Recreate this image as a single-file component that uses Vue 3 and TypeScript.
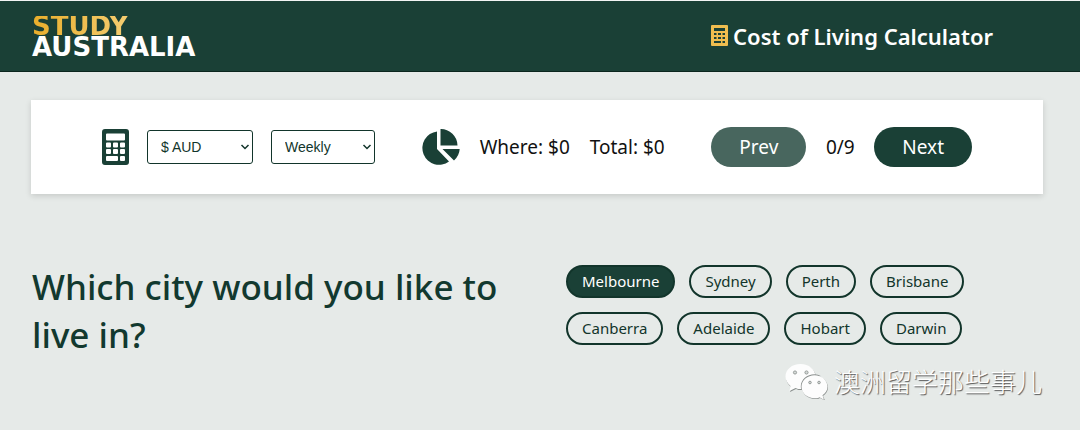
<script setup lang="ts">
import { ref } from 'vue'

const currency = ref<string>('AUD')
const period = ref<string>('Weekly')
const cities: string[] = ['Melbourne', 'Sydney', 'Perth', 'Brisbane', 'Canberra', 'Adelaide', 'Hobart', 'Darwin']
const selected = ref<string>('Melbourne')
</script>

<template>
  <div class="page">
    <header class="bar">
      <a class="logo" href="#"><span class="gold">STUDY</span><span>AUSTRALIA</span></a>
      <h1 class="title">
        <svg class="title-icon" viewBox="0 0 17 21" aria-hidden="true">
          <path
            fill="#efbd4f"
            fill-rule="evenodd"
            d="M1 0h15q1 0 1 1v19q0 1-1 1H1q-1 0-1-1V1q0-1 1-1z
               M3 3v3h11V3z M3 8v2h2.500V8z M7 8v2h3V8z M11.500 8v2H14V8z
               M3 12v2h2.500v-2z M7 12v2h3v-2z M11.500 12v2H14v-2z
               M3 16v2h7v-2z M11.500 16v2H14v-2z"
          />
        </svg>
        <span>Cost of Living Calculator</span>
      </h1>
    </header>

    <section class="card">
      <div class="options">
        <svg class="calc" viewBox="0 0 27 36" aria-hidden="true">
          <path
            fill="#1a4036"
            fill-rule="evenodd"
            d="M3 0h21a3 3 0 0 1 3 3v30a3 3 0 0 1-3 3H3a3 3 0 0 1-3-3V3a3 3 0 0 1 3-3z
               M5 4.500h17q1 0 1 1v5q0 1-1 1H5q-1 0-1-1v-5q0-1 1-1z
               M5 13.500h3q1 0 1 1v3q0 1-1 1H5q-1 0-1-1v-3q0-1 1-1z
               M12 13.500h3q1 0 1 1v3q0 1-1 1h-3q-1 0-1-1v-3q0-1 1-1z
               M19 13.500h3q1 0 1 1v3q0 1-1 1h-3q-1 0-1-1v-3q0-1 1-1z
               M5 20h3q1 0 1 1v3q0 1-1 1H5q-1 0-1-1v-3q0-1 1-1z
               M12 20h3q1 0 1 1v3q0 1-1 1h-3q-1 0-1-1v-3q0-1 1-1z
               M19 20h3q1 0 1 1v3q0 1-1 1h-3q-1 0-1-1v-3q0-1 1-1z
               M5 27h10q1 0 1 1v3q0 1-1 1H5q-1 0-1-1v-3q0-1 1-1z
               M19 27h3q1 0 1 1v3q0 1-1 1h-3q-1 0-1-1v-3q0-1 1-1z"
          />
        </svg>
        <select v-model="currency" class="select" aria-label="Currency">
          <option value="AUD">$ AUD</option>
        </select>
        <select v-model="period" class="select narrow" aria-label="Period">
          <option>Weekly</option>
        </select>
      </div>

      <div class="totals">
        <svg class="pie" viewBox="0 0 38 36" aria-hidden="true">
          <path
            fill="#1a4036"
            d="M15 2.500V20l12 12.500A16.700 16.700 0 1 1 15 2.500zM18.500 0a16.700 16.700 0 0 1 17 16.500h-17zM20.500 20h17.200a17 17 0 0 1-5.700 11.500z"
          />
        </svg>
        <span>Where: $0</span>
        <span>Total: $0</span>
      </div>

      <nav class="steps" aria-label="Steps">
        <button class="step prev" type="button">Prev</button>
        <span class="count">0/9</span>
        <button class="step" type="button">Next</button>
      </nav>
    </section>

    <main class="question">
      <h2>Which city would you like to live in?</h2>
      <div class="cities">
        <button
          v-for="city in cities"
          :key="city"
          type="button"
          class="chip"
          :class="{ active: city === selected }"
          :aria-pressed="city === selected"
          @click="selected = city"
        >{{ city }}</button>
      </div>
    </main>

    <div class="watermark">
      <svg viewBox="0 0 43 37" aria-hidden="true">
        <g fill="#8b908e">
          <path d="M16 2C7.500 2 1 7.500 1 14.500c0 4 2 7 5 9.500l-1 5 6-3c2 1 3 1 5 1 8 0 15-5.500 15-12.500S24.500 2 16 2z" />
          <path d="M30 13c-7 0-13 5-13 11.500S23 36 30 36c2 0 4 0 5-1l5 2.500-2-4.500c3-2 5-5 5-8.500C43 18 37 13 30 13z" />
        </g>
        <path fill="#fdfdfd" d="M15.500 1C7 1 .5 6.500.5 13.500c0 4 2 7 5 9.500l-1 5 6-3c2 1 3 1 5 1 8 0 15-5.500 15-12.500S24 1 15.500 1z" />
        <path fill="#8b908e" d="M29.500 11.300c-7.500 0-13.700 5.500-13.700 12 0 1 0 2 .4 3h2l11-13h7c-2-1.300-4.500-2-6.700-2z" />
        <path fill="#fdfdfd" d="M29.500 12.300c-7 0-13 5-13 11.500s6 11.500 13 11.500c2 0 4 0 5-1l4.500 2.500-1.500-4.500c3-2 5-5 5-8.500 0-6.500-6-11.500-13-11.500z" />
        <g fill="#d5dad8" stroke="#858b89" stroke-width=".8">
          <circle cx="10" cy="9.500" r="1.600" /><circle cx="21.500" cy="9.500" r="1.600" />
          <circle cx="25" cy="19.500" r="1.300" /><circle cx="34" cy="19.500" r="1.300" />
        </g>
      </svg>
      <span lang="zh-CN">澳洲留学那些事儿</span>
    </div>
  </div>
</template>

<style>
body {
  margin: 0;
  background: #e6eae8;
}
</style>

<style scoped>
.page {
  position: relative;
  box-sizing: border-box;
  min-height: 100vh;
  background: #e6eae8;
  color: #111;
  font-family: "Noto Sans", sans-serif;
  font-size: 19px;
}
.bar {
  display: flex;
  align-items: center;
  justify-content: space-between;
  padding: 15px 87px 13px 32px;
  border-top: 1px solid #f3f5f4;
  border-bottom: 1px solid #0b261e;
  background: #1a4036;
  color: #fff;
}
.logo {
  display: flex;
  flex-direction: column;
  color: #fff;
  font: bold 26px/21px "DejaVu Sans", sans-serif;
  text-decoration: none;
}
.gold {
  background: linear-gradient(90deg, #e9ae2b, #f5cd72 60%);
  background-clip: text;
  color: transparent;
}
.title {
  display: flex;
  align-items: center;
  gap: 5px;
  margin: 0;
  padding-bottom: 3px;
  font-size: 22px;
  font-weight: 600;
  line-height: 28px;
}
.title-icon {
  width: 17px;
  height: 21px;
}
.card {
  display: flex;
  align-items: center;
  justify-content: space-between;
  margin: 28px 37px 0 31px;
  padding: 27px 71px;
  background: #fff;
  box-shadow: 0 2px 6px rgba(0, 0, 0, 0.14);
}
.options,
.totals,
.steps {
  display: flex;
  align-items: center;
  gap: 18px;
  white-space: nowrap;
}
.totals {
  gap: 20px;
}
.calc {
  width: 27px;
  height: 36px;
}
.select {
  appearance: none;
  box-sizing: border-box;
  width: 106px;
  height: 34px;
  padding: 0 16px 0 13px;
  border: 1px solid #12352b;
  border-radius: 3px;
  background: #fff url("data:image/svg+xml,%3Csvg xmlns='http://www.w3.org/2000/svg' width='10' height='6'%3E%3Cpath d='M1.500 1L5 4.500 8.500 1' fill='none' stroke='%2312352b' stroke-width='1.500'/%3E%3C/svg%3E") no-repeat right 2px center;
  color: #12352b;
  font: 14px "Liberation Sans", sans-serif;
}
.narrow {
  width: 104px;
}
.pie {
  width: 38px;
  height: 36px;
}
.count {
  min-width: 32px;
  text-align: center;
}
.step {
  padding: 6px 28px;
  border: 0;
  border-radius: 20px;
  background: #1a4036;
  color: #fff;
  font: inherit;
  line-height: 28px;
}
.prev {
  background: #48665e;
}
.question {
  display: grid;
  grid-template-columns: 520px 1fr;
  gap: 14px;
  align-items: start;
  margin: 69px 37px 0 32px;
}
h2 {
  margin: 0;
  color: #12392f;
  font-size: 35px;
  font-weight: 500;
  line-height: 48px;
}
.cities {
  display: flex;
  flex-wrap: wrap;
  gap: 14px;
  padding-top: 2px;
}
.chip {
  padding: 4px 14px;
  border: 2px solid #12352b;
  border-radius: 17px;
  background: transparent;
  color: #12352b;
  font: inherit;
  font-size: 15px;
  line-height: 21px;
}
.active {
  background: #1a4036;
  color: #fff;
}
.watermark {
  position: absolute;
  right: 38px;
  bottom: 30px;
  display: flex;
  align-items: center;
  gap: 6px;
  color: #fff;
  font: 300 26px/38px "Noto Sans CJK SC", sans-serif;
  text-shadow: 1px 1px 1px #555;
}
.watermark svg {
  width: 43px;
  height: 37px;
}
</style>
